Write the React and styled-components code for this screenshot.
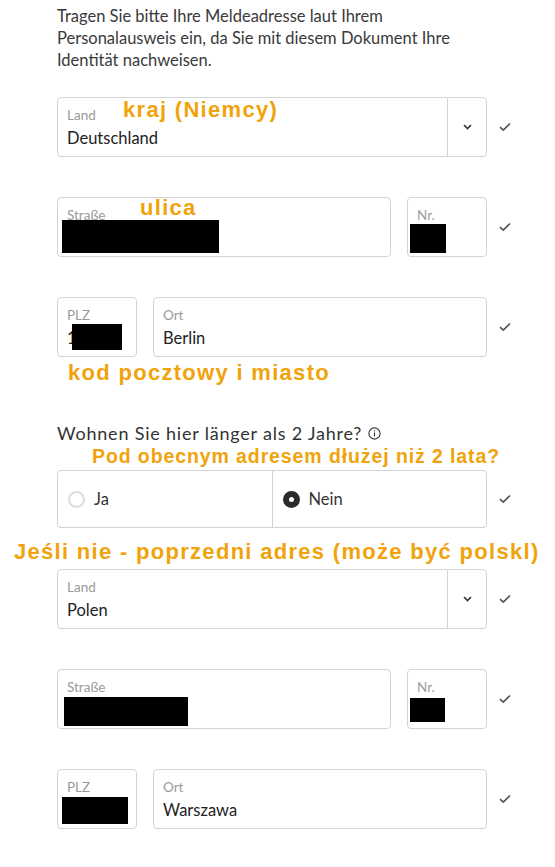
import React from 'react';
import styled, { createGlobalStyle } from 'styled-components';

const GlobalStyle = createGlobalStyle`
	body {
		margin: 0;
		background: #fff;
		font-family: Lato, "Noto Sans", sans-serif;
		color: #333;
	}
`;

const Page = styled.div`
	position: relative;
	width: 555px;
	padding: 5px 0 40px 57px;
	box-sizing: border-box;
`;

const Intro = styled.p`
	margin: 0;
	width: 412px;
	font-size: 16.5px;
	line-height: 22px;
	color: #3a3a3a;
`;

const Section = styled.div`
	display: flex;
	flex-direction: column;
	gap: 40px;
	margin-top: ${(p) => p.$top || 0}px;
`;

const Row = styled.div`
	position: relative;
	display: flex;
	align-items: center;
`;

const Fields = styled.div`
	display: flex;
	gap: 16px;
	width: 430px;
`;

const Box = styled.div`
	position: relative;
	display: flex;
	flex: ${(p) => (p.$width ? `0 0 ${p.$width}px` : '1')};
	height: 60px;
	box-sizing: border-box;
	border: 1px solid #d3d3d3;
	border-radius: 4px;
	background: #fff;
`;

const Inner = styled.div`
	flex: 1;
	padding: 9px 9px 0;
`;

const Label = styled.div`
	font-size: 13.5px;
	line-height: 16px;
	color: #9a9a9a;
`;

const Value = styled.div`
	margin-top: 5px;
	font-size: 16.5px;
	line-height: 20px;
	color: #222;
`;

const Toggle = styled.div`
	display: flex;
	align-items: center;
	justify-content: center;
	width: 38px;
	border-left: 1px solid #d3d3d3;
	color: #333;
`;

const CheckCell = styled.div`
	display: flex;
	justify-content: center;
	width: 36px;
	color: #555;
`;

const Redacted = styled.div`
	position: absolute;
	left: ${(p) => p.$x}px;
	top: ${(p) => p.$y}px;
	width: ${(p) => p.$w}px;
	height: ${(p) => p.$h}px;
	background: #000;
`;

const Note = styled.div`
	position: absolute;
	left: ${(p) => p.$x}px;
	top: ${(p) => p.$y}px;
	white-space: nowrap;
	font-family: "Liberation Sans", Arial, sans-serif;
	font-weight: 700;
	font-size: ${(p) => p.$size || 22}px;
	line-height: 24px;
	letter-spacing: ${(p) => p.$spacing ?? 1.3}px;
	color: #f0a30a;
`;

const Question = styled.div`
	display: flex;
	align-items: center;
	gap: 6px;
	margin: 65px 0 26px;
	font-size: 18px;
	line-height: 22px;
	letter-spacing: 0.8px;
	color: #333;
`;

const RadioGroup = styled.div`
	display: flex;
	width: 430px;
	height: 58px;
	box-sizing: border-box;
	border: 1px solid #d3d3d3;
	border-radius: 4px;
`;

const RadioOption = styled.label`
	flex: 1;
	display: flex;
	align-items: center;
	gap: 9px;
	padding-left: 10px;
	font-size: 16.5px;
	color: #333;
	& + & {
		border-left: 1px solid #d3d3d3;
	}
`;

const RadioDot = styled.span`
	width: 17px;
	height: 17px;
	box-sizing: border-box;
	border-radius: 50%;
	border: ${(p) => (p.$on ? '6px solid #2b2b2b' : '2px solid #dcdcdc')};
	background: #fff;
`;

const Check = () => (
	<svg width="12" height="10" viewBox="0 0 12 10" fill="none">
		<path d="M1 5.2 L4.3 8.2 L11 1.5" stroke="currentColor" strokeWidth="1.7" />
	</svg>
);

const Chevron = () => (
	<svg width="9" height="6" viewBox="0 0 9 6" fill="none">
		<path d="M1 1 L4.5 4.5 L8 1" stroke="currentColor" strokeWidth="1.6" />
	</svg>
);

const Info = () => (
	<svg width="13" height="13" viewBox="0 0 13 13" fill="none">
		<circle cx="6.5" cy="6.5" r="5.6" stroke="#333" strokeWidth="1.1" />
		<rect x="5.95" y="5.4" width="1.1" height="4" fill="#333" />
		<rect x="5.95" y="3.2" width="1.1" height="1.2" fill="#333" />
	</svg>
);

const Field = ({ label, value, width, children }) => (
	<Box $width={width}>
		<Inner>
			<Label>{label}</Label>
			<Value>{value || '\u00a0'}</Value>
		</Inner>
		{children}
	</Box>
);

const CountryRow = ({ value, note }) => (
	<Row>
		<Fields>
			<Field label="Land" value={value}>
				<Toggle>
					<Chevron />
				</Toggle>
				{note}
			</Field>
		</Fields>
		<CheckCell>
			<Check />
		</CheckCell>
	</Row>
);

const StreetRow = ({ street, nr, note }) => (
	<Row>
		<Fields>
			<Field label="Straße">
				<Redacted {...street} />
				{note}
			</Field>
			<Field label="Nr." width={80}>
				<Redacted {...nr} />
			</Field>
		</Fields>
		<CheckCell>
			<Check />
		</CheckCell>
	</Row>
);

const CityRow = ({ plz, plzPrefix, city, note }) => (
	<Row>
		<Fields>
			<Field label="PLZ" value={plzPrefix} width={80}>
				<Redacted {...plz} />
			</Field>
			<Field label="Ort" value={city} />
		</Fields>
		<CheckCell>
			<Check />
		</CheckCell>
		{note}
	</Row>
);

export default function App() {
	return (
		<>
			<GlobalStyle />
			<Page>
				<Intro>
					Tragen Sie bitte Ihre Meldeadresse laut Ihrem Personalausweis ein, da Sie mit
					diesem Dokument Ihre Identität nachweisen.
				</Intro>

				<Section $top={26}>
					<CountryRow value="Deutschland" note={<Note $x={65} $y={0}>kraj (Niemcy)</Note>} />
					<StreetRow
						street={{ $x: 4, $y: 22, $w: 157, $h: 33 }}
						nr={{ $x: 2, $y: 26, $w: 36, $h: 29 }}
						note={<Note $x={82} $y={-2}>ulica</Note>}
					/>
					<CityRow
						plzPrefix="1"
						plz={{ $x: 14, $y: 26, $w: 50, $h: 26 }}
						city="Berlin"
						note={<Note $x={11} $y={64}>kod pocztowy i miasto</Note>}
					/>
				</Section>

				<Question>
					Wohnen Sie hier länger als 2 Jahre? <Info />
				</Question>

				<Row>
					<Note $x={35} $y={-26} $size={19.5} $spacing={0.9}>
						Pod obecnym adresem dłużej niż 2 lata?
					</Note>
					<RadioGroup>
						<RadioOption>
							<RadioDot />
							Ja
						</RadioOption>
						<RadioOption>
							<RadioDot $on />
							Nein
						</RadioOption>
					</RadioGroup>
					<CheckCell>
						<Check />
					</CheckCell>
					<Note $x={-43} $y={70}>Jeśli nie - poprzedni adres (może być polskl)</Note>
				</Row>

				<Section $top={41}>
					<CountryRow value="Polen" />
					<StreetRow
						street={{ $x: 6, $y: 27, $w: 124, $h: 29 }}
						nr={{ $x: 2, $y: 28, $w: 35, $h: 24 }}
					/>
					<CityRow plz={{ $x: 4, $y: 27, $w: 66, $h: 27 }} city="Warszawa" />
				</Section>
			</Page>
		</>
	);
}
